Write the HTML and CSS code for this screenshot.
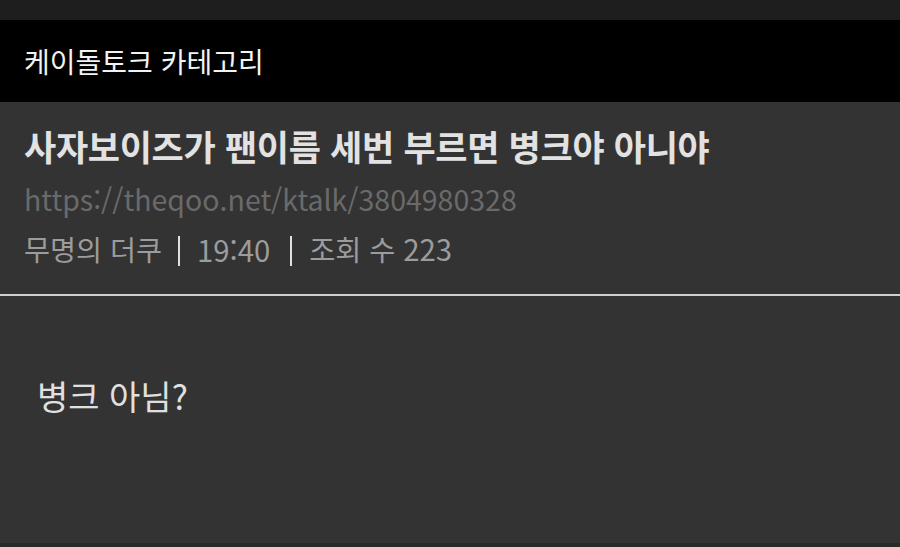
FILE: index.html
```html
<!DOCTYPE html>
<html lang="ko">
<head>
<meta charset="utf-8">
<link rel="stylesheet" href="styles.css">
</head>
<body>
<div class="statusbar"></div>
<header class="appbar">케이돌토크 카테고리</header>
<section class="post-head">
  <h1 class="title">사자보이즈가 팬이름 세번 부르면 병크야 아니야</h1>
  <div class="url">https://theqoo.net/ktalk/3804980328</div>
  <div class="meta"><span>무명의 더쿠</span><span class="sep" aria-hidden="true"></span><span class="num time">19:40</span><span class="sep" aria-hidden="true"></span><span>조회 수 <span class="num">223</span></span></div>
</section>
<hr class="divider">
<main class="post-body">
  <p class="content">병크 아님?</p>
</main>
<div class="bottom"></div>
</body>
</html>
```

FILE: styles.css
```css
html, body {
  margin: 0;
  padding: 0;
  background: #333333;
  font-family: "Noto Sans CJK KR", "Noto Sans", sans-serif;
  width: 900px;
  height: 547px;
  overflow: hidden;
}
body {
  display: flex;
  flex-direction: column;
}
.statusbar {
  height: 20px;
  background: #1e1e1e;
  flex: none;
}
.appbar {
  height: 82px;
  background: #000;
  color: #f2f2f2;
  font-size: 28px;
  display: flex;
  align-items: center;
  padding-left: 24px;
  flex: none;
}
.post-head {
  padding: 20px 24px 0 24px;
  height: 172px;
  flex: none;
}
.title {
  margin: 0;
  font-size: 35px;
  font-weight: 700;
  color: #e2e2e2;
  line-height: 48px;
  letter-spacing: -0.3px;
}
.url {
  color: #6a6a6a;
  font-size: 28.5px;
  line-height: 50px;
  margin-top: 4px;
}
.meta {
  color: #9c9c9c;
  font-size: 28.3px;
  line-height: 48px;
  display: flex;
  align-items: center;
}
.num {
  font-size: 29.3px;
}
.time {
  margin-right: 4px;
}
.sep {
  display: inline-block;
  width: 2px;
  height: 30px;
  background: #e0e0e0;
  margin: 4px 17px 0 16px;
}
.divider {
  margin: 0;
  border: none;
  height: 2px;
  background: #d0d0d0;
  flex: none;
}
.post-body {
  flex: 1;
  padding: 76px 37px 0;
}
.content {
  margin: 0;
  color: #e0e0e0;
  font-size: 34px;
  line-height: 48px;
}
.bottom {
  height: 4px;
  background: #2a2a2a;
  flex: none;
}
```
